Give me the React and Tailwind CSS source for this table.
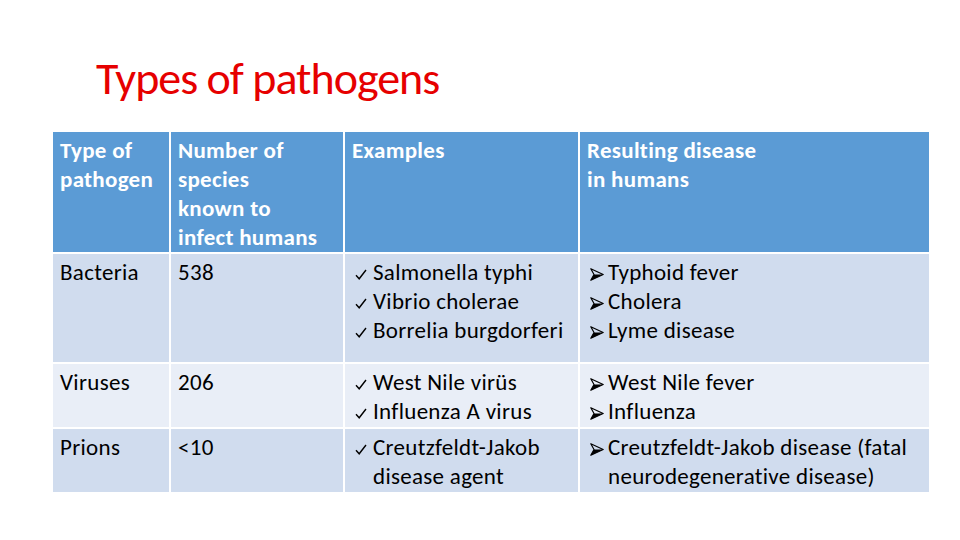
const rows = [
  {
    type: "Bacteria",
    count: "538",
    examples: ["Salmonella typhi", "Vibrio cholerae", "Borrelia burgdorferi"],
    diseases: ["Typhoid fever", "Cholera", "Lyme disease"],
    bg: "bg-[#d0dcee]",
    h: "h-[108px]",
  },
  {
    type: "Viruses",
    count: "206",
    examples: ["West Nile virüs", "Influenza A virus"],
    diseases: ["West Nile fever", "Influenza"],
    bg: "bg-[#e9eef7]",
    h: "h-[63px]",
  },
  {
    type: "Prions",
    count: "<10",
    examples: ["Creutzfeldt-Jakob disease agent"],
    diseases: ["Creutzfeldt-Jakob disease (fatal neurodegenerative disease)"],
    bg: "bg-[#d0dcee]",
    h: "h-[63px]",
  },
];

const headers = [
  ["Type of", "pathogen"],
  ["Number of", "species", "known to", "infect humans"],
  ["Examples"],
  ["Resulting disease", "in humans"],
];

const Check = () => (
  <svg width="12" height="11" viewBox="0 0 12 11" className="mt-[11px] ml-[3px]">
    <path d="M1 6.2 L4.2 9.8 L11 1" fill="none" stroke="#000" strokeWidth="1.4" />
  </svg>
);

const Arrow = () => (
  <svg width="14" height="13" viewBox="0 0 14 13" className="mt-[10px] ml-[3px]">
    <path d="M0.8 0.8 L13.2 6.5 L0.8 12.2 L4 6.5 Z" fill="none" stroke="#000" strokeWidth="1.2" strokeLinejoin="round" />
    <path d="M4 6.5 L13.2 6.5 L0.8 12.2 Z" fill="#000" />
  </svg>
);

function Bullets({ items, Mark }) {
  return (
    <div>
      {items.map((t) => (
        <div key={t} className="flex">
          <span className="w-[21px] shrink-0 h-[29px]">
            <Mark />
          </span>
          <span>{t}</span>
        </div>
      ))}
    </div>
  );
}

export default function App() {
  return (
    <div className="w-[960px] h-[540px] bg-white font-['Carlito','Lato',sans-serif] overflow-hidden">
      <h1 className="pt-[52px] pl-[96px] h-[132px] text-[46px] leading-[52px] tracking-[-1px] text-[#e60000]">
        Types of pathogens
      </h1>

      <div className="ml-[53px] grid grid-cols-[116px_172px_233px_349px] gap-[2px] text-[23px] leading-[29px] tracking-[0.3px] text-black">
        {/* Header */}
        {headers.map((lines, i) => (
          <div key={i} className="h-[120px] bg-[#5b9bd5] pt-[4px] pl-[7px] font-bold text-white">
            {lines.map((l) => (
              <div key={l} className="whitespace-nowrap">{l}</div>
            ))}
          </div>
        ))}

        {rows.map((r) => (
          <>
            <div key={r.type + "a"} className={`${r.bg} ${r.h} pt-[4px] pl-[7px]`}>{r.type}</div>
            <div key={r.type + "b"} className={`${r.bg} ${r.h} pt-[4px] pl-[7px]`}>{r.count}</div>
            <div key={r.type + "c"} className={`${r.bg} ${r.h} pt-[4px] pl-[7px]`}>
              <Bullets items={r.examples} Mark={Check} />
            </div>
            <div key={r.type + "d"} className={`${r.bg} ${r.h} pt-[4px] pl-[7px] pr-[4px]`}>
              <Bullets items={r.diseases} Mark={Arrow} />
            </div>
          </>
        ))}
      </div>
    </div>
  );
}
